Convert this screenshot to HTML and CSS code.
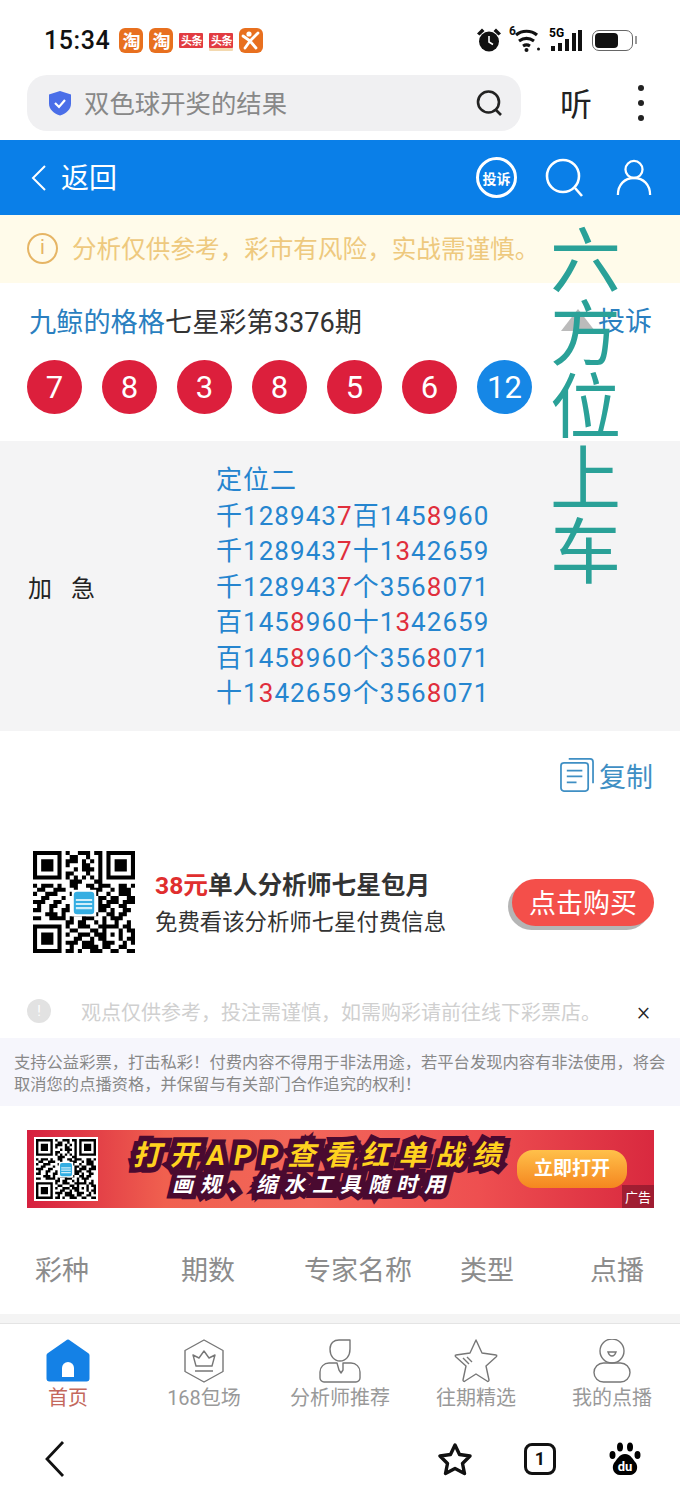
FILE: index.html
```html
<!DOCTYPE html>
<html lang="en">
<head>
    <meta charset="UTF-8">
    <meta name="viewport" content="width=device-width, initial-scale=1.0">
    <title>七星彩第3376期</title>
    <link rel="stylesheet" href="styles.css">
</head>
<body>
    <svg class="defs" width="0" height="0">
        <symbol id="qr" viewBox="0 0 25 25">
            <path fill-rule="evenodd" d="M0 0h7v7h-7zM1 1v5h5v-5zM2 2h3v3h-3zM18 0h7v7h-7zM19 1v5h5v-5zM20 2h3v3h-3zM0 18h7v7h-7zM1 19v5h5v-5zM2 20h3v3h-3z"/>
            <path fill="none" stroke="#000" stroke-width="1" d="M8 .5h1m2 0h3m1 0h2M9 1.5h2m2 0h1m2 0h1M8 2.5h3m1 0h1m1 0h1m1 0h1M8 3.5h1m3 0h2m2 0h1M10 4.5h1m1 0h3m1 0h1M8 5.500h2m3 0h1m2 0h1M8 6.500h1m1 0h1m1 0h1m1 0h1m1 0h1M9 7.500h3m3 0h2M0 8.500h1m1 0h3m1 0h1m2 0h2m2 0h2m1 0h3m2 0h2m1 0h2M1 9.500h2m2 0h3m2 0h1m3 0h3m2 0h1m1 0h3M0 10.500h1m2 0h3m3 0h3m3 0h1m2 0h1m2 0h3M2 11.500h2m3 0h1m8 0h2m1 0h2m2 0h2M0 12.500h3m2 0h2m9 0h1m1 0h3m1 0h3M1 13.500h1m2 0h2m2 0h1m7 0h3m2 0h2M0 14.500h2m2 0h1m2 0h2m7 0h2m1 0h1m2 0h2M3 15.500h3m1 0h1m2 0h3m2 0h1m2 0h2m1 0h2M0 16.500h2m2 0h4m1 0h1m2 0h3m2 0h1m1 0h3M8 17.500h2m1 0h2m2 0h1m1 0h1m2 0h1m2 0h1M8 18.500h1m2 0h3m2 0h5m1 0h2M9 19.500h2m3 0h2m1 0h1m3 0h1m1 0h2M8 20.500h1m2 0h3m1 0h3m1 0h1m1 0h1m2 0h1M10 21.500h2m2 0h1m1 0h2m3 0h1m1 0h2M8 22.500h3m1 0h3m2 0h3m2 0h1m1 0h1M9 23.500h1m2 0h4m1 0h2m2 0h2M8 24.500h2m1 0h1m2 0h3m2 0h2m2 0h2"/>
            <rect x="9.500" y="9.500" width="6" height="6.500" fill="#fff"/>
            <rect x="10" y="10" width="5" height="5.500" rx=".8" fill="#35aee2"/>
            <path stroke="#cfeefa" stroke-width=".5" d="M10.500 12h4M10.500 13h4M10.500 14h4"/>
        </symbol>
    </svg>

    <div class="page">
        <div class="statusbar">
            <span class="statusbar__time">15:34</span>
            <div class="statusbar__apps">
                <span class="app app--orange">淘</span>
                <span class="app app--orange">淘</span>
                <span class="app app--red">头条</span>
                <span class="app app--red app--strip">头条</span>
                <span class="app app--orange">
                    <svg width="20" height="20" viewBox="0 0 20 20" fill="none" stroke="#fff" stroke-width="2.800" stroke-linecap="round"><circle cx="8" cy="4" r="2.600" fill="#fff" stroke="none"/><path d="M2 6l7 5 8-8M9 11l-5 7M9 11l6 7"/></svg>
                </span>
            </div>
            <div class="statusbar__right">
                <svg width="26" height="26" viewBox="0 0 26 26"><circle cx="13" cy="14.500" r="10" fill="#111"/><path d="M13 9v6l4 2.500" stroke="#fff" stroke-width="1.600" fill="none"/><path d="M1 6.500l5-5 2.500 2.500-5 4.500zM25 6.500l-5-5-2.500 2.500 5 4.500z" fill="#111"/></svg>
                <svg class="statusbar__wifi" width="33" height="26" viewBox="0 0 33 26" fill="none" stroke="#111" stroke-width="3.200"><path d="M6 8c6-5 15-5 21 0M9 14c5-3.500 10-3.500 15 0M13 19c2-1.200 5-1.200 7 0"/><circle cx="16.500" cy="23" r="2" fill="#111" stroke="none"/><circle cx="28.500" cy="22" r="1.500" fill="#111" stroke="none"/></svg>
                <span class="statusbar__six">6</span>
                <svg class="statusbar__signal" width="36" height="26" viewBox="0 0 36 26"><text x="1" y="10" class="statusbar__tiny">5G</text><path d="M3 19h4v5h-4zM10 16h4v8h-4zM17 12h4v12h-4zM24 6h4v18h-4zM30 3h4v21h-4z" fill="#111"/></svg>
                <span class="battery"><span class="battery__level"></span></span>
                <span class="battery__nub"></span>
            </div>
        </div>

        <div class="browserbar">
            <div class="searchpill">
                <svg width="26" height="28" viewBox="0 0 26 28"><path d="M13 2l11 3.500v9c0 6-5 10-11 12C7 24.500 2 20.500 2 14.500v-9z" fill="#4a6ee8"/><path d="M8 14l4 4 6-7" fill="none" stroke="#fff" stroke-width="2.200"/></svg>
                <span class="searchpill__text">双色球开奖的结果</span>
                <svg class="searchpill__icon" width="28" height="28" viewBox="0 0 28 28" fill="none" stroke="#222" stroke-width="2.600"><circle cx="13.500" cy="13" r="10.500"/><path d="M21 21l5 5"/></svg>
            </div>
            <span class="browserbar__listen">听</span>
            <div class="browserbar__more"><i></i><i></i><i></i></div>
        </div>

        <div class="navbar">
            <svg width="18" height="28" viewBox="0 0 18 28" fill="none" stroke="#fff" stroke-width="2"><path d="M15 2L3 14l12 12"/></svg>
            <span class="navbar__back">返回</span>
            <span class="navbar__report">投诉</span>
            <svg width="40" height="42" viewBox="0 0 40 42" fill="none" stroke="#fff" stroke-width="2.600"><circle cx="18" cy="19" r="16"/><path d="M30 31l7 8"/></svg>
            <svg class="navbar__user" width="36" height="42" viewBox="0 0 38 42" fill="none" stroke="#fff" stroke-width="2.400"><circle cx="19" cy="12" r="9"/><path d="M2 39c0-11 7-18 17-18s17 7 17 18"/></svg>
        </div>

        <div class="warning">
            <span class="warning__icon">i</span>
            <span class="warning__text">分析仅供参考，彩市有风险，实战需谨慎。</span>
        </div>

        <div class="title">
            <span class="title__name">九鲸的格格</span><span>七星彩第3376期</span>
            <span class="title__report">
                <svg width="36" height="24" viewBox="0 0 36 24"><path d="M18 1l17 22H1z" fill="#bbb"/></svg>
                <span>投诉</span>
            </span>
        </div>

        <div class="balls">
            <span class="ball">7</span>
            <span class="ball">8</span>
            <span class="ball">3</span>
            <span class="ball">8</span>
            <span class="ball">5</span>
            <span class="ball">6</span>
            <span class="ball ball--blue">12</span>
        </div>

        <div class="prediction">
            <span class="prediction__label">加 急</span>
            <div class="prediction__lines">
                <div>定位二</div>
                <div>千128943<b>7</b>百145<b>8</b>960</div>
                <div>千128943<b>7</b>十1<b>3</b>42659</div>
                <div>千128943<b>7</b>个356<b>8</b>071</div>
                <div>百145<b>8</b>960十1<b>3</b>42659</div>
                <div>百145<b>8</b>960个356<b>8</b>071</div>
                <div>十1<b>3</b>42659个356<b>8</b>071</div>
            </div>
        </div>

        <div class="copyrow">
            <svg width="34" height="34" viewBox="0 0 35 35" fill="none" stroke="#3f8fc4" stroke-width="1.800"><path d="M9 1h22a3 3 0 0 1 3 3v22"/><rect x="1" y="5" width="28" height="29" rx="3"/><path d="M7 13h16M7 19h16M7 25h10"/></svg>
            <span>复制</span>
        </div>

        <div class="promo">
            <svg class="promo__qr" width="102" height="102"><use href="#qr"/></svg>
            <div class="promo__text">
                <div class="promo__title"><em>38元</em>单人分析师七星包月</div>
                <div class="promo__sub">免费看该分析师七星付费信息</div>
            </div>
            <span class="promo__buy">点击购买</span>
        </div>

        <div class="tip">
            <span class="tip__icon">!</span>
            <span class="tip__text">观点仅供参考，投注需谨慎，如需购彩请前往线下彩票店。</span>
            <span class="tip__close">×</span>
        </div>

        <div class="terms">支持公益彩票，打击私彩！付费内容不得用于非法用途，若平台发现内容有非法使用，将会取消您的点播资格，并保留与有关部门合作追究的权利！</div>

        <div class="banner">
            <span class="banner__qr"><svg width="60" height="60"><use href="#qr"/></svg></span>
            <div class="banner__copy">
                <div class="banner__title">打开APP查看红单战绩</div>
                <div class="banner__sub">画规、缩水工具随时用</div>
            </div>
            <span class="banner__open">立即打开</span>
            <span class="banner__ad">广告</span>
        </div>

        <div class="tablehead">
            <span>彩种</span>
            <span>期数</span>
            <span>专家名称</span>
            <span>类型</span>
            <span>点播</span>
        </div>

        <div class="tabs">
            <div class="tab tab--active">
                <svg width="44" height="44" viewBox="0 0 44 44"><path d="M20 1.500a3 3 0 0 1 4 0L42 14a3 3 0 0 1 1.500 3v22.500a3 3 0 0 1-3 3h-37a3 3 0 0 1-3-3V17A3 3 0 0 1 2 14z" fill="#1481e6"/><path d="M16 38V29a6 6 0 0 1 12 0v9z" fill="#fff"/></svg>
                <span>首页</span>
            </div>
            <div class="tab">
                <svg width="44" height="44" viewBox="0 0 44 44" fill="none" stroke="#777" stroke-width="1.400" stroke-linejoin="round"><path d="M22 1l19 10.500v21L22 43 3 32.500v-21z"/><path d="M14 27l-3-11 6 3 5-7 5 7 6-3-3 11zM13 32h18"/></svg>
                <span>168包场</span>
            </div>
            <div class="tab">
                <svg width="44" height="44" viewBox="0 0 44 44" fill="none" stroke="#777" stroke-width="1.400" stroke-linejoin="round"><path d="M12 10c0-6 4-9 9-9h11v9c0 7-4 12-10 12-6 0-10-5-10-12z"/><path d="M19 24h-8C6 24 2 28 2 33v6c0 2 2 4 4 4h32c2 0 4-2 4-4v-6c0-5-4-9-9-9h-8v7l-2 3-2-3z"/></svg>
                <span>分析师推荐</span>
            </div>
            <div class="tab">
                <svg width="44" height="44" viewBox="0 0 44 44" fill="none" stroke="#777" stroke-width="1.400" stroke-linejoin="round"><path d="M22 1l6 13 14 2c1 0 1 1 0 2L32 27l3 14c0 1-1 2-2 1l-11-7-11 7c-1 1-2 0-2-1l3-14L2 18c-1-1-1-2 0-2l14-2z"/><path d="M9 19l6 6M13 18l5 5"/></svg>
                <span>往期精选</span>
            </div>
            <div class="tab">
                <svg width="44" height="44" viewBox="0 0 44 44" fill="none" stroke="#777" stroke-width="1.400"><circle cx="22" cy="12" r="12"/><path d="M18 13h8c-1 3-2 4-4 4s-3-1-4-4z"/><rect x="4" y="24" width="36" height="19" rx="9.500"/></svg>
                <span>我的点播</span>
            </div>
        </div>

        <div class="systembar">
            <svg class="systembar__back" width="24" height="38" viewBox="0 0 24 38" fill="none" stroke="#111" stroke-width="2.800"><path d="M20 2L4 19l16 17"/></svg>
            <svg width="34" height="34" viewBox="0 0 34 34" fill="none" stroke="#111" stroke-width="3.400" stroke-linejoin="round"><path d="M17 3l4.500 9.500 10.500 1.500-7.500 7.500 2 10-9.500-5-9.500 5 2-10L2 14l10.500-1.500z"/></svg>
            <span class="systembar__tabs">1</span>
            <svg width="32" height="34" viewBox="0 0 32 34"><ellipse cx="11" cy="5" rx="3" ry="4.500"/><ellipse cx="21" cy="5" rx="3" ry="4.500"/><ellipse cx="3.500" cy="13" rx="3" ry="4"/><ellipse cx="28.500" cy="13" rx="3" ry="4"/><path d="M16 12c6 0 8 6 11 9 3 5 0 12-6 12H11c-6 0-9-7-6-12 3-3 5-9 11-9z"/><text x="16" y="29" class="systembar__du">du</text></svg>
        </div>

        <div class="overlay">六方位上车</div>
    </div>
</body>
</html>
```

FILE: styles.css
```css
* {
    box-sizing: border-box;
}

body {
    margin: 0;
    background-color: #fff;
    font-family: Roboto, 'Noto Sans CJK SC', sans-serif;
}

.defs {
    position: absolute;
}

.page {
    position: relative;
    width: 680px;
    height: 1500px;
    overflow: hidden;
}

.overlay {
    position: absolute;
    top: 219px;
    left: 550px;
    width: 72px;
    font-size: 71px;
    line-height: 72.800px;
    color: #2aa198;
    font-family: 'Noto Sans CJK SC', sans-serif;
}

/* status bar */
.statusbar {
    display: flex;
    align-items: center;
    height: 75px;
    padding: 5px 43px 0 44px;
}

.statusbar__time {
    font-size: 25px;
    font-weight: 500;
    letter-spacing: 0.600px;
    color: #111;
}

.statusbar__apps {
    display: flex;
    gap: 6px;
    margin-left: 9px;
}

.app {
    display: flex;
    align-items: center;
    justify-content: center;
    width: 24px;
    height: 25px;
    border-radius: 6px;
    color: #fff;
    font-size: 18px;
    font-weight: 700;
}

.app--orange {
    background-color: #e8701f;
}

.app--red {
    height: 15px;
    margin-top: 5px;
    border-radius: 1px;
    background-color: #e23b41;
    font-size: 11px;
    letter-spacing: -0.500px;
}

.app--strip {
    box-shadow: 0 3px 0 #f3d9b0;
}

.statusbar__right {
    position: relative;
    display: flex;
    align-items: center;
    margin-left: auto;
}

.statusbar__wifi {
    margin-left: 8px;
}

/* small sim number sitting over the wifi icon */
.statusbar__six {
    position: absolute;
    top: -3px;
    left: 33px;
    font-size: 12px;
    line-height: 14px;
    font-weight: 700;
    color: #111;
}

.statusbar__signal {
    margin-left: 5px;
}

.statusbar__tiny {
    font-size: 12px;
    font-weight: 700;
}

.battery {
    display: block;
    width: 41px;
    height: 21px;
    margin-left: 8px;
    padding: 2px;
    border: 1.500px solid #666;
    border-radius: 7px;
}

.battery__level {
    display: block;
    width: 23px;
    height: 100%;
    border-radius: 4px;
    background-color: #111;
}

.battery__nub {
    width: 2px;
    height: 8px;
    margin-left: 2px;
    background-color: #999;
}

/* browser search */
.browserbar {
    display: flex;
    align-items: center;
    height: 65px;
    padding: 0 36px 9px 27px;
}

.searchpill {
    display: flex;
    align-items: center;
    width: 494px;
    height: 56px;
    padding: 0 18px 0 20px;
    border-radius: 20px;
    background-color: #f0f0f2;
}

.searchpill__text {
    margin-left: 11px;
    padding-bottom: 3px;
    font-size: 25.400px;
    color: #888;
}

.searchpill__icon {
    margin-left: auto;
}

.browserbar__listen {
    margin-left: 39px;
    padding-bottom: 3px;
    font-size: 32px;
    color: #222;
}

.browserbar__more {
    display: flex;
    flex-direction: column;
    gap: 9px;
    margin-left: auto;
}

.browserbar__more i {
    width: 6px;
    height: 6px;
    border-radius: 50%;
    background-color: #222;
}

/* blue nav */
.navbar {
    display: flex;
    align-items: center;
    height: 75px;
    padding: 0 28px 0 30px;
    background-color: #0a7fe8;
    color: #fff;
}

.navbar__back {
    margin-left: 13px;
    padding-bottom: 3px;
    font-size: 28px;
}

.navbar__report {
    display: flex;
    align-items: center;
    justify-content: center;
    width: 41px;
    height: 41px;
    margin-left: auto;
    margin-right: 28px;
    border: 3px solid #fff;
    border-radius: 50%;
    font-size: 14px;
    font-weight: 700;
}

.navbar__user {
    margin-left: 31px;
}

.warning {
    display: flex;
    align-items: center;
    gap: 14px;
    height: 68px;
    padding-left: 27px;
    background-color: #fffbea;
    font-size: 24.600px;
    color: #eec97e;
}

.warning__text {
    padding-bottom: 5px;
}

.warning__icon {
    width: 31px;
    height: 31px;
    margin-bottom: 2px;
    border: 2.500px solid #e6b565;
    border-radius: 50%;
    font-size: 20px;
    line-height: 25px;
    text-align: center;
    color: #e6b565;
}

/* title and balls */
.title {
    display: flex;
    align-items: center;
    height: 77px;
    padding: 0 28px 4px 29px;
    font-size: 27.200px;
    color: #333;
}

.title__name {
    color: #2a7fc0;
}

.title__report {
    display: flex;
    align-items: center;
    gap: 2px;
    margin-left: auto;
    font-size: 27px;
    color: #2a7fc0;
}

.balls {
    display: flex;
    gap: 20px;
    height: 81px;
    padding-left: 27px;
}

.ball {
    display: flex;
    align-items: center;
    justify-content: center;
    width: 55px;
    height: 54px;
    border-radius: 50%;
    background-color: #dc1f3c;
    font-size: 31px;
    color: #fff;
}

.ball--blue {
    background-color: #1687e6;
}

/* prediction block */
.prediction {
    display: flex;
    align-items: center;
    height: 290px;
    padding-left: 28px;
    background-color: #f4f4f5;
}

.prediction__label {
    width: 188px;
    font-size: 24px;
    word-spacing: 13px;
    color: #222;
}

.prediction__lines {
    padding-top: 3px;
    font-size: 26px;
    line-height: 35.600px;
    letter-spacing: 1.050px;
    color: #2585cf;
}

.prediction__lines b {
    font-weight: 400;
    color: #e02e3c;
}

.copyrow {
    display: flex;
    align-items: center;
    justify-content: flex-end;
    gap: 5px;
    height: 90px;
    padding: 0 27px 2px 0;
    font-size: 27px;
    color: #3f8fc4;
}

/* package promo */
.promo {
    display: flex;
    align-items: center;
    height: 102px;
    margin-top: 30px;
    padding: 0 26px 0 33px;
}

.promo__text {
    margin-left: 20px;
    padding-bottom: 3px;
}

.promo__title {
    font-size: 24.700px;
    font-weight: 700;
    color: #333;
}

.promo__title em {
    font-style: normal;
    color: #e02e2e;
}

.promo__sub {
    margin-top: 3px;
    font-size: 22.400px;
    color: #333;
}

.promo__buy {
    margin-left: auto;
    padding: 3px 17px 5px;
    border-radius: 24px;
    background-color: #f44f4a;
    box-shadow: -4px 4px 0 #b5b5b5;
    font-size: 27px;
    color: #fff;
}

.tip {
    display: flex;
    align-items: center;
    height: 50px;
    margin-top: 33px;
    padding: 0 30px 0 27px;
    font-size: 20px;
    color: #d0d0d0;
}

.tip__icon {
    width: 24px;
    height: 24px;
    border-radius: 50%;
    background-color: #e2e2e2;
    font-size: 14px;
    line-height: 24px;
    text-align: center;
    color: #fff;
}

.tip__text {
    margin-left: 30px;
}

.tip__close {
    margin-left: auto;
    font-size: 25px;
    font-weight: 300;
    color: #222;
}

.terms {
    height: 68px;
    margin-top: 2px;
    padding: 14px 10px 0 14px;
    background-color: #f6f6fc;
    font-size: 16.300px;
    line-height: 22px;
    color: #888;
}

/* ad banner */
.banner {
    position: relative;
    display: flex;
    align-items: center;
    height: 78px;
    margin: 24px 26px 0 27px;
    padding-left: 7px;
    background: linear-gradient(90deg, #d6203f 0%, #f0604f 22%, #f2665a 45%, #ee4f50 72%, #d9293f 100%);
}

.banner__qr {
    display: flex;
    align-items: center;
    justify-content: center;
    width: 64px;
    height: 64px;
    background-color: #fff;
}

.banner__copy {
    width: 386px;
    margin-left: 30px;
    text-align: center;
    font-style: italic;
    font-weight: 700;
    white-space: nowrap;
}

.banner__title {
    font-size: 28px;
    line-height: 32px;
    letter-spacing: 9px;
    color: #ffd21f;
    -webkit-text-stroke: 11px #4a0a30;
    paint-order: stroke fill;
}

.banner__sub {
    margin-right: 18px;
    font-size: 21px;
    line-height: 26px;
    letter-spacing: 7px;
    color: #fff;
    -webkit-text-stroke: 11px #4a0a30;
    paint-order: stroke fill;
}

.banner__open {
    margin-left: 3px;
    padding: 4px 17px;
    border-radius: 16px;
    background: linear-gradient(#ffc04a, #f5861f);
    font-size: 19px;
    line-height: 30px;
    font-weight: 700;
    color: #fff;
    white-space: nowrap;
}

.banner__ad {
    position: absolute;
    right: 0;
    bottom: 0;
    padding: 2px 3px;
    background-color: rgba(120, 20, 40, 0.6);
    font-size: 13px;
    color: #fff;
}

/* table header */
.tablehead {
    display: flex;
    align-items: center;
    height: 115px;
    padding: 15px 37px 0 35px;
    border-bottom: 9px solid #f4f4f4;
    font-size: 27px;
    color: #8c8c8c;
    white-space: nowrap;
}

.tablehead span:nth-child(2) {
    margin-left: 92px;
}

.tablehead span:nth-child(3) {
    margin-left: 69px;
}

.tablehead span:nth-child(4) {
    margin-left: 48px;
}

.tablehead span:nth-child(5) {
    margin-left: 76px;
}

/* tabs */
.tabs {
    display: grid;
    grid-template-columns: repeat(5, 136px);
    height: 96px;
    border-top: 1px solid #e4e4e4;
}

.tab {
    display: flex;
    flex-direction: column;
    align-items: center;
    padding-top: 15px;
    font-size: 20px;
    line-height: 30px;
    color: #999;
}

.tab--active {
    color: #c4685c;
}

.systembar {
    display: flex;
    align-items: center;
    height: 80px;
    padding: 0 39px 0 43px;
}

.systembar__back {
    margin-right: auto;
}

.systembar__tabs {
    width: 32px;
    height: 32px;
    margin: 0 53px 0 52px;
    border: 3px solid #111;
    border-radius: 8px;
    font-size: 18px;
    font-weight: 700;
    line-height: 26px;
    text-align: center;
    color: #111;
}

.systembar__du {
    font-size: 13px;
    font-weight: 700;
    text-anchor: middle;
    fill: #fff;
}
```
